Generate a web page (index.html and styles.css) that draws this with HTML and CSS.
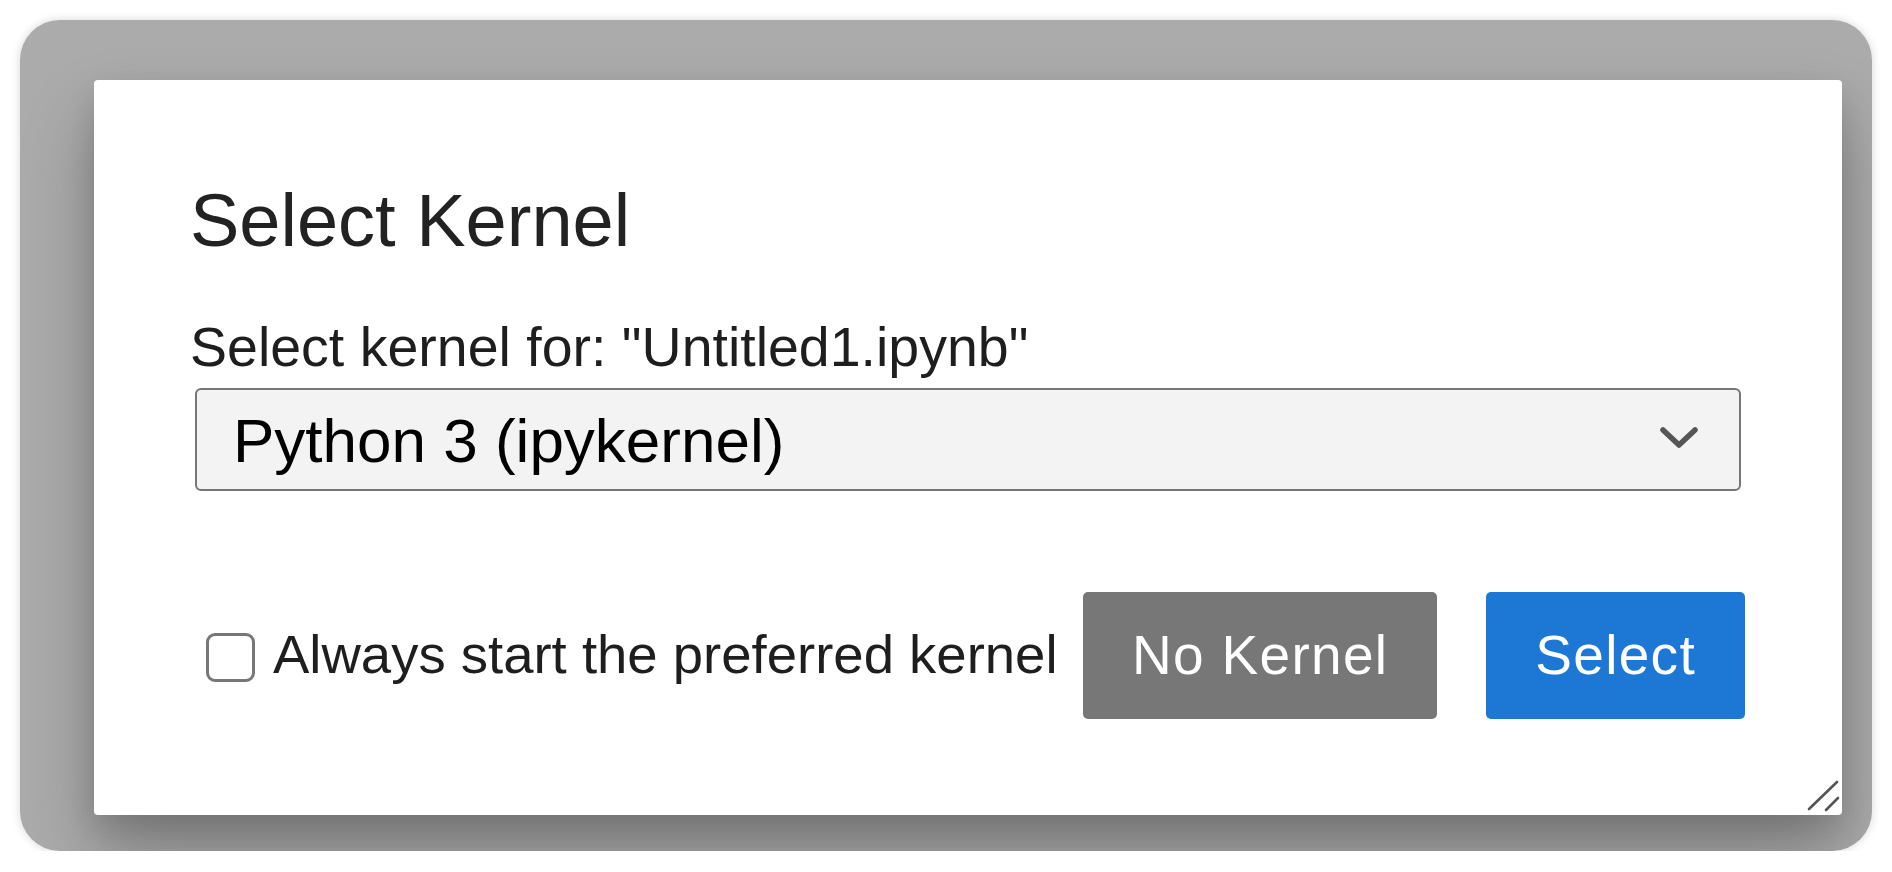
FILE: index.html
```html
<!DOCTYPE html>
<html lang="en">
<head>
<meta charset="utf-8">
<title>Select Kernel</title>
<link rel="stylesheet" href="styles.css">
</head>
<body>
<div class="window">
  <div class="dialog">
    <h1 class="dialog-title">Select Kernel</h1>
    <div class="dialog-body">
      <label class="field-label">Select kernel for: "Untitled1.ipynb"</label>
      <div class="select-box">
        <span class="select-value">Python 3 (ipykernel)</span>
        <svg class="chevron" width="40" height="26" viewBox="0 0 40 26"><path d="M4 5 L20 20 L36 5" fill="none" stroke="#555" stroke-width="5.5" stroke-linecap="round" stroke-linejoin="round"/></svg>
      </div>
    </div>
    <div class="dialog-footer">
      <label class="check-label"><span class="checkbox"></span><span>Always start the preferred kernel</span></label>
      <button class="btn btn-reject">No Kernel</button>
      <button class="btn btn-accept">Select</button>
    </div>
    <svg class="resize-handle" width="34" height="34" viewBox="0 0 34 34"><path d="M3 30 L31 3 M20 31 L32 19" stroke="#555" stroke-width="2.6" stroke-linecap="round"/></svg>
  </div>
</div>
</body>
</html>
```
FILE: styles.css
```css
html, body {
  margin: 0;
  padding: 0;
  background: #ffffff;
  overflow: hidden;
}
body {
  font-family: "Liberation Sans", Arial, Helvetica, sans-serif;
  padding: 20px 20px 0 20px;
}
.window {
  height: 831px;
  box-sizing: border-box;
  padding: 60px 30px 36px 74px;
  background: #ababab;
  border-radius: 40px;
  box-shadow: 0 0 10px rgba(0, 0, 0, 0.16);
  overflow: hidden;
  display: flex;
}
.dialog {
  position: relative;
  flex: 1;
  min-width: 0;
  background: #ffffff;
  border-radius: 4px;
  padding: 104px 97px 0 96px;
  box-shadow: 0 40px 70px 0 rgba(0, 0, 0, 0.26), 0 12px 30px rgba(0, 0, 0, 0.12);
  display: flex;
  flex-direction: column;
}
.dialog-title {
  margin: 0;
  font-size: 74px;
  line-height: 1;
  font-weight: normal;
  color: #222222;
}
.dialog-body {
  margin-top: 62px;
  display: flex;
  flex-direction: column;
}
.field-label {
  font-size: 55.5px;
  line-height: 1;
  color: #1e1e1e;
}
.select-box {
  margin: 12px 4px 0 5px;
  height: 103px;
  box-sizing: border-box;
  border: 2.5px solid #767676;
  border-radius: 6px;
  background: #f3f3f3;
  display: flex;
  align-items: center;
  padding: 3px 40px 0 36px;
}
.select-value {
  flex: 1;
  font-size: 62px;
  line-height: 1;
  color: #000000;
  white-space: nowrap;
}
.chevron {
  display: block;
  margin-top: -6px;
}
.dialog-footer {
  margin-top: 101px;
  display: flex;
  align-items: center;
}
.check-label {
  display: flex;
  align-items: center;
  gap: 18px;
  margin-left: 16px;
  margin-right: auto;
  font-size: 54.5px;
  line-height: 1;
  color: #1e1e1e;
  white-space: nowrap;
}
.checkbox {
  flex-shrink: 0;
  width: 49px;
  height: 49px;
  box-sizing: border-box;
  border: 3px solid #777777;
  border-radius: 9px;
  background: #ffffff;
  margin-top: 4px;
}
.btn {
  flex-shrink: 0;
  white-space: nowrap;
  height: 127px;
  padding: 0 49px;
  border: none;
  border-radius: 5px;
  font-family: "Liberation Sans", Arial, Helvetica, sans-serif;
  font-size: 55px;
  letter-spacing: 1.3px;
  color: #ffffff;
  line-height: 1;
}
.btn-reject {
  margin-left: 20px;
  background: #777777;
}
.btn-accept {
  margin-left: 49px;
  background: #1c77d5;
}
.resize-handle {
  position: absolute;
  right: 2px;
  bottom: 2px;
}
```
